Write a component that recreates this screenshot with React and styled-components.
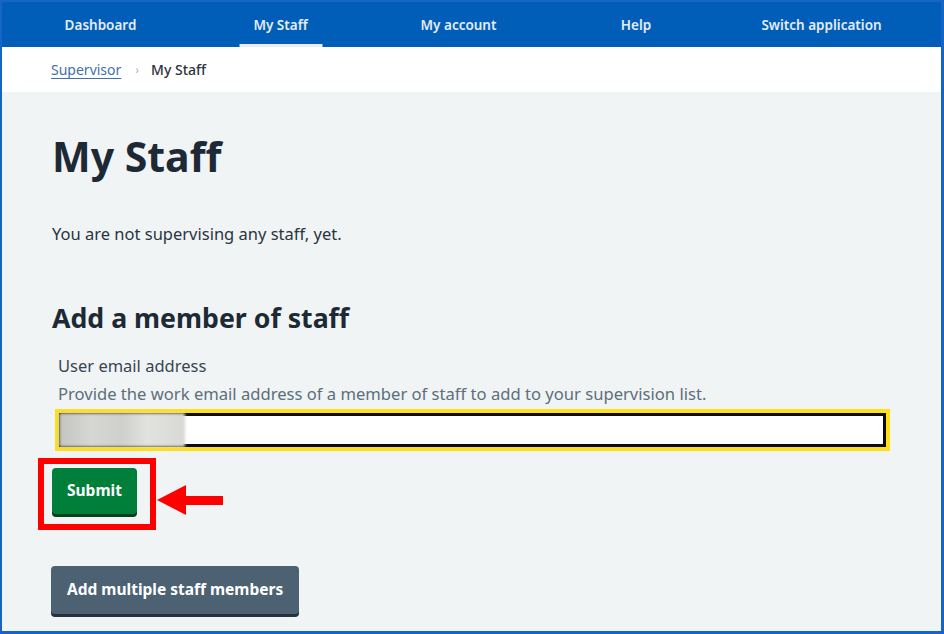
import React from 'react';
import styled, { createGlobalStyle } from 'styled-components';

const GlobalStyle = createGlobalStyle`
  html, body {
    margin: 0;
    padding: 0;
  }
  body {
    font-family: "Noto Sans", "Open Sans", sans-serif;
    color: #212b32;
    background: #ffffff;
  }
  * { box-sizing: border-box; }
`;

const Frame = styled.div`
  width: 944px;
  height: 634px;
  border: 2px solid #1565c8;
  border-right-width: 3px;
  border-bottom-width: 3px;
  background: #f0f4f5;
  overflow: hidden;
  display: flex;
  flex-direction: column;
`;

const Nav = styled.nav`
  height: 45px;
  background: #005eb8;
  display: flex;
  align-items: stretch;
  padding-left: 9px;
`;

const NavItem = styled.a`
  width: ${p => p.w}px;
  display: flex;
  align-items: center;
  justify-content: center;
  position: relative;
  color: #e4ecf6;
  font-size: 13.5px;
  font-weight: 600;
  text-decoration: none;

  &::after {
    content: '';
    display: ${p => (p.active ? 'block' : 'none')};
    position: absolute;
    left: 50%;
    bottom: 0;
    transform: translateX(-50%);
    width: 83px;
    height: 3px;
    background: #e8edee;
  }
`;

const Breadcrumb = styled.div`
  height: 45px;
  background: #ffffff;
  display: flex;
  align-items: center;
  gap: 10px;
  padding-left: 49px;
  font-size: 14px;
`;

const CrumbLink = styled.a`
  color: #3f6fb0;
  text-decoration: underline;
  text-underline-offset: 3px;
`;

const Chevron = styled.span`
  color: #aeb7bd;
  font-size: 12px;
  margin: 0 2px 0 4px;
`;

const CrumbCurrent = styled.span`
  color: #2c3338;
  font-weight: 500;
`;

const Main = styled.main`
  padding: 36px 0 0 50px;
  display: flex;
  flex-direction: column;
  align-items: flex-start;
`;

const Title = styled.h1`
  margin: 0;
  font-size: 41px;
  font-weight: 700;
  line-height: 56px;
  color: #1d2a35;
`;

const Lead = styled.p`
  margin: 38px 0 0;
  font-size: 16.5px;
  color: #2a3540;
`;

const SubTitle = styled.h2`
  margin: 56px 0 0;
  font-size: 26.7px;
  font-weight: 700;
  line-height: 34px;
  color: #1d2a35;
`;

const FormGroup = styled.div`
  margin-top: 21px;
  display: flex;
  flex-direction: column;
  width: 838px;
`;

const Label = styled.label`
  padding-left: 6px;
  font-size: 16.5px;
  color: #3a4550;
  line-height: 20px;
`;

const Hint = styled.span`
  padding-left: 6px;
  margin-top: 8px;
  font-size: 16.6px;
  color: #5d6e7c;
  line-height: 20px;
`;

const InputWrap = styled.div`
  margin: 5px 0 0 3px;
  height: 42px;
  border: 4px solid #ffdf1c;
  background: #ffdf1c;
  display: flex;
`;

const Input = styled.div`
  flex: 1;
  border: 3px solid #0b0c0c;
  background: #ffffff;
  display: flex;
`;

const Blurred = styled.div`
  width: 126px;
  margin: -3px 0 -3px -3px;
  background: linear-gradient(90deg, #c3c3c0 0%, #d6d6d2 25%, #cfcfcb 50%, #e2e2de 70%, #d8d8d4 100%);
  filter: blur(1.5px);
`;

const SubmitRow = styled.div`
  margin: 7px 0 0 -14px;
  display: flex;
  align-items: center;
  gap: 1px;
`;

const Highlight = styled.div`
  border: 6px solid #ff0000;
  padding: 4px 13px 10px 8px;
`;

const Button = styled.button`
  border: 0;
  border-radius: 4px;
  font-family: inherit;
  font-size: 15.5px;
  font-weight: 700;
  color: #ffffff;
  background: ${p => p.bg};
  box-shadow: 0 3px 0 ${p => p.shadow};
  height: ${p => p.h}px;
  padding: 0 ${p => p.px}px 2px;
  cursor: pointer;
`;

const Arrow = styled.svg`
  display: block;
  margin-top: 12px;
`;

const SecondaryWrap = styled.div`
  margin-top: 36px;
  margin-left: -1px;
`;

const navItems = [
  { label: 'Dashboard', w: 179 },
  { label: 'My Staff', w: 181, active: true },
  { label: 'My account', w: 175 },
  { label: 'Help', w: 180 },
  { label: 'Switch application', w: 191 },
];

export default function App() {
  return (
    <>
      <GlobalStyle />
      <Frame>
        <Nav>
          {navItems.map(item => (
            <NavItem key={item.label} w={item.w} active={item.active}>
              {item.label}
            </NavItem>
          ))}
        </Nav>
        <Breadcrumb>
          <CrumbLink>Supervisor</CrumbLink>
          <Chevron>›</Chevron>
          <CrumbCurrent>My Staff</CrumbCurrent>
        </Breadcrumb>
        <Main>
          <Title>My Staff</Title>
          <Lead>You are not supervising any staff, yet.</Lead>
          <SubTitle>Add a member of staff</SubTitle>
          <FormGroup>
            <Label>User email address</Label>
            <Hint>Provide the work email address of a member of staff to add to your supervision list.</Hint>
            <InputWrap>
              <Input>
                <Blurred />
              </Input>
            </InputWrap>
          </FormGroup>
          <SubmitRow>
            <Highlight>
              <Button bg="#007f3b" shadow="#00401e" h={46} px={15}>Submit</Button>
            </Highlight>
            <Arrow width="66" height="32" viewBox="0 0 66 32">
              <polygon points="0,16 29,1 29,12 66,12 66,21 29,21 29,31" fill="#ff0000" />
            </Arrow>
          </SubmitRow>
          <SecondaryWrap>
            <Button bg="#4c6272" shadow="#263139" h={48} px={16}>Add multiple staff members</Button>
          </SecondaryWrap>
        </Main>
      </Frame>
    </>
  );
}
